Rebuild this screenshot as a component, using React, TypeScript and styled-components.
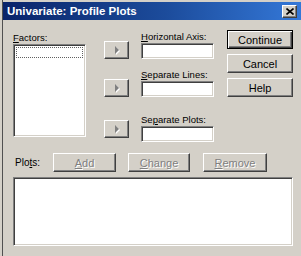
import React from "react";
import styled, { createGlobalStyle } from "styled-components";

const GlobalStyle = createGlobalStyle`
	html, body {
		margin: 0;
		padding: 0;
		background: #d4d0c8;
	}
	* {
		box-sizing: border-box;
	}
`;

const Window = styled.div`
	width: 301px;
	height: 256px;
	background: #d4d0c8;
	padding: 2px 0 0 3px;
	box-shadow: inset 2px 0 0 #d4d0c8, inset 3px 0 0 #505050;
	font-family: "Liberation Sans", Arial, sans-serif;
	font-size: 11px;
	color: #000;
	overflow: hidden;
`;

const TitleBar = styled.div`
	height: 18px;
	display: flex;
	align-items: center;
	justify-content: space-between;
	padding: 0 4px 0 4px;
	background: linear-gradient(to right, #0a246a 0%, #1c4c9c 55%, #3478d8 100%);
	color: #fff;
	font-weight: bold;
	font-size: 11.5px;
`;

const CloseButton = styled.div`
	width: 15px;
	height: 13px;
	display: flex;
	align-items: center;
	justify-content: center;
	background: #d4d0c8;
	border: 1px solid;
	border-color: #fff #404040 #404040 #fff;
	box-shadow: inset -1px -1px 0 #808080;
	svg {
		width: 8px;
		height: 7px;
	}
`;

const Content = styled.div`
	padding: 0 0 0 10px;
`;

const Top = styled.div`
	display: flex;
	align-items: flex-start;
`;

const Column = styled.div<{ $width: number; $ml?: number; $pt?: number }>`
	width: ${(p) => p.$width}px;
	margin-left: ${(p) => p.$ml ?? 0}px;
	padding-top: ${(p) => p.$pt ?? 0}px;
	display: flex;
	flex-direction: column;
`;

const Label = styled.div<{ $mt?: number }>`
	height: 13px;
	line-height: 13px;
	margin-top: ${(p) => p.$mt ?? 0}px;
	white-space: nowrap;
	font-size: 9.5px;
	u {
		text-decoration: underline;
		text-underline-offset: 1px;
	}
`;

const Sunken = styled.div<{ $height: number; $width?: string; $mt?: number }>`
	height: ${(p) => p.$height}px;
	width: ${(p) => p.$width ?? "100%"};
	margin-top: ${(p) => p.$mt ?? 0}px;
	background: #fff;
	border: 1px solid;
	border-color: #808080 #fff #fff #808080;
	box-shadow: inset 1px 1px 0 #404040, inset -1px -1px 0 #d4d0c8;
	padding: 2px;
`;

const FocusRow = styled.div`
	height: 11px;
	border: 1px dotted #606060;
`;

const RaisedButton = styled.div<{
	$width: number;
	$height: number;
	$mt?: number;
	$ml?: number;
	$default?: boolean;
}>`
	width: ${(p) => p.$width}px;
	height: ${(p) => p.$height}px;
	margin-top: ${(p) => p.$mt ?? 0}px;
	margin-left: ${(p) => p.$ml ?? 0}px;
	display: flex;
	align-items: center;
	justify-content: center;
	background: #d4d0c8;
	border: 1px solid;
	border-color: ${(p) => (p.$default ? "#000" : "#fff #404040 #404040 #fff")};
	box-shadow: ${(p) =>
		p.$default
			? "inset 1px 1px 0 #fff, inset -1px -1px 0 #404040, inset -2px -2px 0 #808080"
			: "inset -1px -1px 0 #808080"};
	font-size: 11px;
`;

const Disabled = styled.span`
	color: #808080;
	text-shadow: 1px 1px 0 #fff;
	u {
		text-decoration: underline;
	}
`;

const Arrow = styled.span`
	width: 0;
	height: 0;
	border-top: 4px solid transparent;
	border-bottom: 4px solid transparent;
	border-left: 4px solid #808080;
	filter: drop-shadow(1px 1px 0 #fff);
`;

const PlotsRow = styled.div`
	display: flex;
	align-items: center;
	margin-top: 11px;
	height: 19px;
`;

const PlotsLabel = styled.div`
	width: 40px;
	padding-left: 2px;
	font-size: 10px;
`;

function App() {
	return (
		<>
			<GlobalStyle />
			<Window>
				<TitleBar>
					<span>Univariate: Profile Plots</span>
					<CloseButton>
						<svg viewBox="0 0 8 7">
							<path d="M0.5 0.5 L7.5 6.5 M7.5 0.5 L0.5 6.5" stroke="#000" strokeWidth="1.6" />
						</svg>
					</CloseButton>
				</TitleBar>
				<Content>
					<Top>
						<Column $width={73} $pt={11}>
							<Label>
								<u>F</u>actors:
							</Label>
							<Sunken $height={93}>
								<FocusRow />
							</Sunken>
						</Column>
						<Column $width={25} $ml={18} $pt={21}>
							<RaisedButton $width={25} $height={18}>
								<Arrow />
							</RaisedButton>
							<RaisedButton $width={25} $height={18} $mt={20}>
								<Arrow />
							</RaisedButton>
							<RaisedButton $width={25} $height={18} $mt={23}>
								<Arrow />
							</RaisedButton>
						</Column>
						<Column $width={73} $ml={12} $pt={10}>
							<Label>
								<u>H</u>orizontal Axis:
							</Label>
							<Sunken $height={16} />
							<Label $mt={9}>
								<u>S</u>eparate Lines:
							</Label>
							<Sunken $height={16} />
							<Label $mt={16}>
								Se<u>p</u>arate Plots:
							</Label>
							<Sunken $height={16} />
						</Column>
						<Column $width={66} $ml={13} $pt={10}>
							<RaisedButton $width={66} $height={19} $default>
								Continue
							</RaisedButton>
							<RaisedButton $width={66} $height={19} $mt={5}>
								Cancel
							</RaisedButton>
							<RaisedButton $width={66} $height={19} $mt={5}>
								Help
							</RaisedButton>
						</Column>
					</Top>
					<PlotsRow>
						<PlotsLabel>
							Plo<u>t</u>s:
						</PlotsLabel>
						<RaisedButton $width={63} $height={19}>
							<Disabled>
								<u>A</u>dd
							</Disabled>
						</RaisedButton>
						<RaisedButton $width={62} $height={19} $ml={12}>
							<Disabled>
								<u>C</u>hange
							</Disabled>
						</RaisedButton>
						<RaisedButton $width={64} $height={19} $ml={13}>
							<Disabled>
								<u>R</u>emove
							</Disabled>
						</RaisedButton>
					</PlotsRow>
					<Sunken $height={69} $width="280px" $mt={5} />
				</Content>
			</Window>
		</>
	);
}

export default App;
